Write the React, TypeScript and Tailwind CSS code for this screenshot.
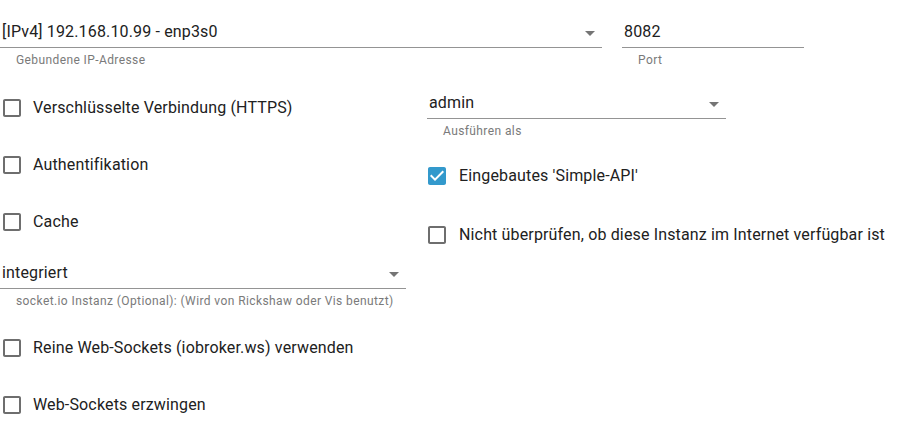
import { FC } from "react";

type SelectProps = {
  value: string;
  helper: string;
  width: string;
};

const ArrowDropDown = () => (
  <svg viewBox="0 0 24 24" className="w-6 h-6 absolute right-0 top-[5px] fill-[#757575]">
    <path d="M7 10l5 5 5-5z" />
  </svg>
);

const SelectField: FC<SelectProps & { arrow?: boolean }> = ({ value, helper, width, arrow = true }) => {
  return (
    <div className={width}>
      <div className="relative flex items-center h-[32px] border-b border-[#949494] text-[16px] tracking-[0.15px] text-[#212121]">
        <span className="pt-[1px] pl-[2px]">{value}</span>
        {arrow && <ArrowDropDown />}
      </div>
      <p className="mt-[5px] pl-[16px] text-[12px] leading-[14px] tracking-[0.4px] text-[#7a7a7a]">{helper}</p>
    </div>
  );
};

type CheckProps = {
  label: string;
  checked?: boolean;
  className?: string;
};

const CheckRow: FC<CheckProps> = ({ label, checked = false, className = "" }) => {
  return (
    <label className={`flex items-center h-[42px] gap-[9px] ${className}`}>
      {checked ? (
        <svg viewBox="0 0 24 24" className="w-6 h-6 shrink-0 fill-[#3399cc]">
          <path d="M19 3H5c-1.11 0-2 .9-2 2v14c0 1.1.89 2 2 2h14c1.11 0 2-.9 2-2V5c0-1.1-.89-2-2-2zm-9 14l-5-5 1.41-1.41L10 14.17l7.59-7.59L19 8l-9 9z" />
        </svg>
      ) : (
        <svg viewBox="0 0 24 24" className="w-6 h-6 shrink-0 fill-[#6e6e6e]">
          <path d="M19 5v14H5V5h14m0-2H5c-1.11 0-2 .9-2 2v14c0 1.1.89 2 2 2h14c1.1 0 2-.9 2-2V5c0-1.1-.9-2-2-2z" />
        </svg>
      )}
      <span className="text-[16px] tracking-[0.15px] text-[#212121]">{label}</span>
    </label>
  );
};

export default function App() {
  return (
    <div className="w-[914px] h-[423px] bg-white overflow-hidden font-['Roboto',sans-serif]">
      <div className="flex gap-[20px] pt-[16px]">
        <SelectField value="[IPv4] 192.168.10.99 - enp3s0" helper="Gebundene IP-Adresse" width="w-[602px]" />
        <SelectField value="8082" helper="Port" width="w-[182px]" arrow={false} />
      </div>

      <div className="flex gap-[21px]">
        <div className="w-[406px] flex flex-col">
          <CheckRow label="Verschlüsselte Verbindung (HTTPS)" className="mt-[20px]" />
          <CheckRow label="Authentifikation" className="mt-[15px]" />
          <CheckRow label="Cache" className="mt-[15px]" />
          <div className="mt-[14px]">
            <SelectField
              value="integriert"
              helper="socket.io Instanz (Optional): (Wird von Rickshaw oder Vis benutzt)"
              width="w-[406px]"
            />
          </div>
          <CheckRow label="Reine Web-Sockets (iobroker.ws) verwenden" className="mt-[19px]" />
          <CheckRow label="Web-Sockets erzwingen" className="mt-[15px]" />
        </div>

        <div className="w-[470px] flex flex-col">
          <div className="mt-[20px]">
            <SelectField value="admin" helper="Ausführen als" width="w-[299px]" />
          </div>
          <CheckRow label="Eingebautes 'Simple-API'" checked className="mt-[17px] -ml-[2px] gap-[10px]" />
          <CheckRow
            label="Nicht überprüfen, ob diese Instanz im Internet verfügbar ist"
            className="mt-[17px] -ml-[2px] gap-[10px]"
          />
        </div>
      </div>
    </div>
  );
}
